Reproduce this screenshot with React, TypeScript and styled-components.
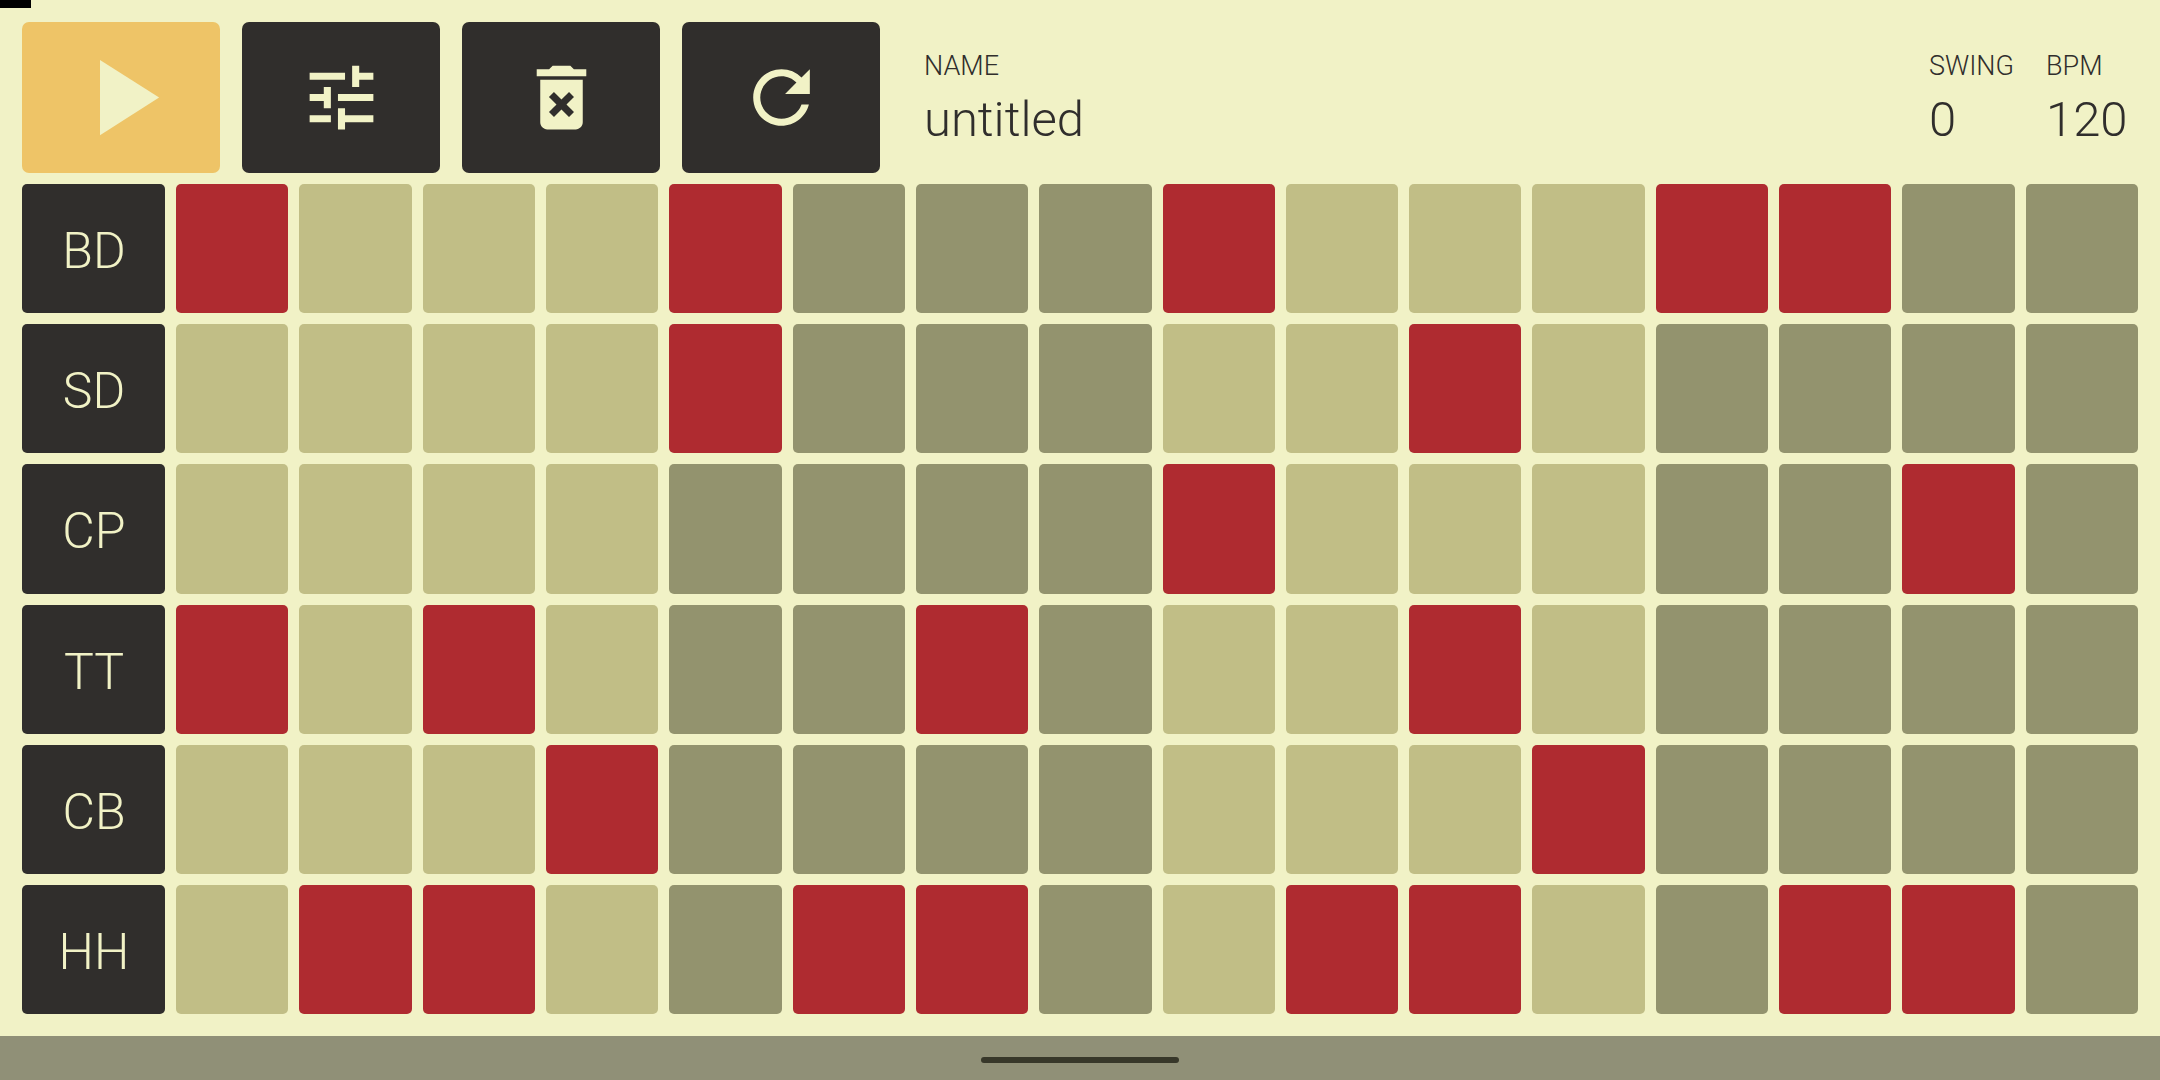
import React, { useState } from "react";
import styled, { createGlobalStyle, ThemeProvider } from "styled-components";
import { MdDeleteForever, MdPlayArrow, MdRefresh, MdTune } from "react-icons/md";

const theme = {
  paper: "#f1f2c6",
  ink: "#302e2c",
  accent: "#eec467",
  hit: "#af2b30",
  sand: "#c1be86",
  olive: "#93936e",
  nav: "#909077",
  handle: "#38382a",
};

type Theme = typeof theme;
type Themed = { theme: Theme };

const GlobalStyle = createGlobalStyle`
  *, *::before, *::after { box-sizing: border-box; }
  body {
    margin: 0;
    font-family: Roboto, "Liberation Sans", sans-serif;
    font-weight: 300;
  }
  button, input { font: inherit; color: inherit; }
`;

const Screen = styled.div`
  min-height: 100vh;
  display: flex;
  flex-direction: column;
  background: ${({ theme }: Themed) => theme.paper};
  color: ${({ theme }: Themed) => theme.ink};
`;

const StatusCorner = styled.div`
  position: absolute;
  top: 0;
  left: 0;
  width: 31px;
  height: 8px;
  background: #000;
`;

const Main = styled.main`
  flex: 1;
  display: flex;
  flex-direction: column;
  gap: 11px;
  padding: 22px;
`;

const Toolbar = styled.header`
  display: flex;
  gap: 22px;
`;

const ToolButton = styled.button<{ $accent?: boolean }>`
  flex: none;
  display: flex;
  align-items: center;
  justify-content: center;
  width: 198px;
  height: 151px;
  padding: 0;
  border: 0;
  border-radius: 7px;
  cursor: pointer;
  background: ${({ theme, $accent }) => ($accent ? (theme as Theme).accent : (theme as Theme).ink)};
  color: ${({ theme }) => (theme as Theme).paper};
`;

const Fields = styled.div`
  flex: 1;
  display: flex;
  gap: 32px;
  padding: 26px 11px 0 22px;
`;

const Field = styled.div<{ $grow?: boolean; $width?: number }>`
  flex: ${({ $grow }) => ($grow ? "1" : "none")};
  width: ${({ $width }) => ($width ? `${$width}px` : "auto")};
  display: flex;
  flex-direction: column;
  gap: 6px;
`;

const FieldLabel = styled.label`
  font-size: 27px;
  line-height: 36px;
`;

const FieldInput = styled.input`
  width: 0;
  min-width: 100%;
  height: 60px;
  padding: 0;
  border: 0;
  outline: 0;
  background: transparent;
  font-size: 49px;
  line-height: 60px;
`;

const Tracks = styled.section`
  flex: 1;
  display: grid;
  grid-auto-rows: 1fr;
  gap: 11px;
`;

const Track = styled.div`
  display: grid;
  grid-template-columns: 143px repeat(16, minmax(0, 1fr));
  gap: 11px;
`;

const TrackButton = styled.button`
  padding: 5px 0 0 1px;
  border: 0;
  border-radius: 5px;
  cursor: pointer;
  font-size: 50px;
  background: ${({ theme }: Themed) => theme.ink};
  color: ${({ theme }: Themed) => theme.paper};
`;

const Step = styled.button<{ $on: boolean; $dark: boolean }>`
  padding: 0;
  border: 0;
  border-radius: 5px;
  cursor: pointer;
  background: ${({ theme, $on, $dark }) => {
    const t = theme as Theme;
    return $on ? t.hit : $dark ? t.olive : t.sand;
  }};
`;

const NavBar = styled.footer`
  display: flex;
  justify-content: center;
  align-items: center;
  height: 44px;
  padding: 8px 0 4px;
  background: ${({ theme }: Themed) => theme.nav};
`;

const NavHandle = styled.div`
  width: 198px;
  height: 6px;
  border-radius: 3px;
  background: ${({ theme }: Themed) => theme.handle};
`;

const initialPattern: Record<string, string> = {
  BD: "x...x...x...xx..",
  SD: "....x.....x.....",
  CP: "........x.....x.",
  TT: "x.x...x...x.....",
  CB: "...x.......x....",
  HH: ".xx..xx..xx..xx.",
};

const parse = (pattern: Record<string, string>) =>
  Object.entries(pattern).map(([name, steps]) => ({
    name,
    steps: [...steps].map((c) => c === "x"),
  }));

export default function App() {
  const [tracks, setTracks] = useState(() => parse(initialPattern));
  const [name, setName] = useState("untitled");
  const [swing, setSwing] = useState("0");
  const [bpm, setBpm] = useState("120");

  const toggle = (row: number, col: number) =>
    setTracks((all) =>
      all.map((t, r) =>
        r === row ? { ...t, steps: t.steps.map((s, c) => (c === col ? !s : s)) } : t
      )
    );

  const clear = () =>
    setTracks((all) => all.map((t) => ({ ...t, steps: t.steps.map(() => false) })));

  return (
    <ThemeProvider theme={theme}>
      <GlobalStyle />
      <Screen>
        <StatusCorner />
        <Main>
          <Toolbar>
            <ToolButton $accent aria-label="Play">
              <MdPlayArrow size={129} />
            </ToolButton>
            <ToolButton aria-label="Settings">
              <MdTune size={85} />
            </ToolButton>
            <ToolButton aria-label="Clear pattern" onClick={clear}>
              <MdDeleteForever size={85} />
            </ToolButton>
            <ToolButton aria-label="Reload pattern" onClick={() => setTracks(parse(initialPattern))}>
              <MdRefresh size={85} />
            </ToolButton>
            <Fields>
              <Field $grow>
                <FieldLabel htmlFor="name">NAME</FieldLabel>
                <FieldInput id="name" value={name} onChange={(e) => setName(e.target.value)} />
              </Field>
              <Field>
                <FieldLabel htmlFor="swing">SWING</FieldLabel>
                <FieldInput
                  id="swing"
                  inputMode="numeric"
                  value={swing}
                  onChange={(e) => setSwing(e.target.value)}
                />
              </Field>
              <Field $width={81}>
                <FieldLabel htmlFor="bpm">BPM</FieldLabel>
                <FieldInput
                  id="bpm"
                  inputMode="numeric"
                  value={bpm}
                  onChange={(e) => setBpm(e.target.value)}
                />
              </Field>
            </Fields>
          </Toolbar>
          <Tracks aria-label="Step sequencer">
            {tracks.map((track, row) => (
              <Track key={track.name}>
                <TrackButton>{track.name}</TrackButton>
                {track.steps.map((on, col) => (
                  <Step
                    key={col}
                    $on={on}
                    $dark={Math.floor(col / 4) % 2 === 1}
                    aria-pressed={on}
                    aria-label={`${track.name} step ${col + 1}`}
                    onClick={() => toggle(row, col)}
                  />
                ))}
              </Track>
            ))}
          </Tracks>
        </Main>
        <NavBar>
          <NavHandle />
        </NavBar>
      </Screen>
    </ThemeProvider>
  );
}
